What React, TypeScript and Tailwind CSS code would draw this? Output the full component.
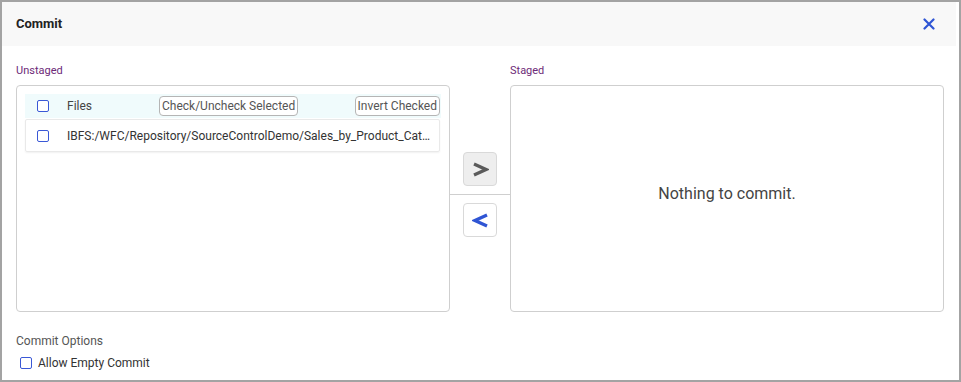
import React from 'react';

const Checkbox: React.FC<{ className?: string }> = ({ className = '' }) => (
    <span className={`inline-block w-[12px] h-[12px] border border-[#3a58d6] rounded-[2px] bg-white shrink-0 ${className}`} />
);

const PillButton: React.FC<{ label: string }> = ({ label }) => (
    <button className="h-[20px] px-[2px] border border-[#b5b5b5] rounded-[4px] bg-white text-[12px] leading-none text-[#555]">
        {label}
    </button>
);

export default function App() {
    return (
        <div className="w-[961px] h-[382px] border-2 border-[#a3a3a3] bg-white flex flex-col font-['Roboto',sans-serif] overflow-hidden">
            <div className="h-[44px] bg-[#f8f8f8] mr-[3px] flex items-center justify-between pl-[14px] pr-[21px] shrink-0">
                <h2 className="text-[13px] font-bold text-[#222]">Commit</h2>
                <button className="text-[#2f55d4]">
                    <svg width="12" height="12" viewBox="0 0 12 12" fill="none" stroke="currentColor" strokeWidth={2.2} strokeLinecap="round">
                        <path d="M1.5 1.5l9 9M10.5 1.5l-9 9" />
                    </svg>
                </button>
            </div>

            <div className="flex pl-[14px] pt-[16px]">
                <div className="w-[434px] flex flex-col">
                    <div className="text-[11px] leading-[18px] text-[#6d2a78] h-[23px]">Unstaged</div>
                    <div className="h-[227px] border border-[#cfcfcf] rounded-[4px] p-[8px] flex flex-col gap-[1px]">
                        <div className="h-[24px] bg-[#f0fbfc] flex items-center pl-[12px] pr-[1px]">
                            <Checkbox />
                            <span className="ml-[18px] text-[12px] text-[#444] w-[92px]">Files</span>
                            <PillButton label="Check/Uncheck Selected" />
                            <span className="flex-1" />
                            <PillButton label="Invert Checked" />
                        </div>
                        <div className="h-[33px] mr-[1px] border border-[#e9e9e9] rounded-[2px] shadow-[0_1px_2px_rgba(0,0,0,0.06)] flex items-center pl-[11px]">
                            <Checkbox />
                            <span className="ml-[18px] w-[366px] truncate text-[12px] text-[#333]">
                                IBFS:/WFC/Repository/SourceControlDemo/Sales_by_Product_Category_and_Region.fex
                            </span>
                        </div>
                    </div>
                </div>

                <div className="w-[60px] flex flex-col pt-[90px]">
                    <button className="self-center w-[34px] h-[34px] bg-[#eeeeee] border border-[#d9d9d9] rounded-[4px] flex items-center justify-center text-[#5a5a5a]">
                        <svg width="17" height="15" viewBox="0 0 17 15" fill="none" stroke="currentColor" strokeWidth={3.2}>
                            <path d="M2 2l12 5.5L2 13" />
                        </svg>
                    </button>
                    <div className="h-px bg-[#cfcfcf] my-[8px]" />
                    <button className="self-center w-[34px] h-[34px] bg-white border border-[#d9d9d9] rounded-[4px] flex items-center justify-center text-[#2f55d4]">
                        <svg width="17" height="15" viewBox="0 0 17 15" fill="none" stroke="currentColor" strokeWidth={3.2}>
                            <path d="M15 2L3 7.5 15 13" />
                        </svg>
                    </button>
                </div>

                <div className="w-[434px] flex flex-col">
                    <div className="text-[11px] leading-[18px] text-[#6d2a78] h-[23px]">Staged</div>
                    <div className="h-[227px] border border-[#cfcfcf] rounded-[4px] flex items-center justify-center pb-[10px]">
                        <span className="text-[16px] text-[#444]">Nothing to commit.</span>
                    </div>
                </div>
            </div>

            <div className="pl-[14px] pt-[22px]">
                <div className="text-[12px] leading-[14px] text-[#555]">Commit Options</div>
                <label className="flex items-center mt-[6px] pl-[4px]">
                    <Checkbox />
                    <span className="ml-[6px] text-[12px] text-[#333]">Allow Empty Commit</span>
                </label>
            </div>
        </div>
    );
}
